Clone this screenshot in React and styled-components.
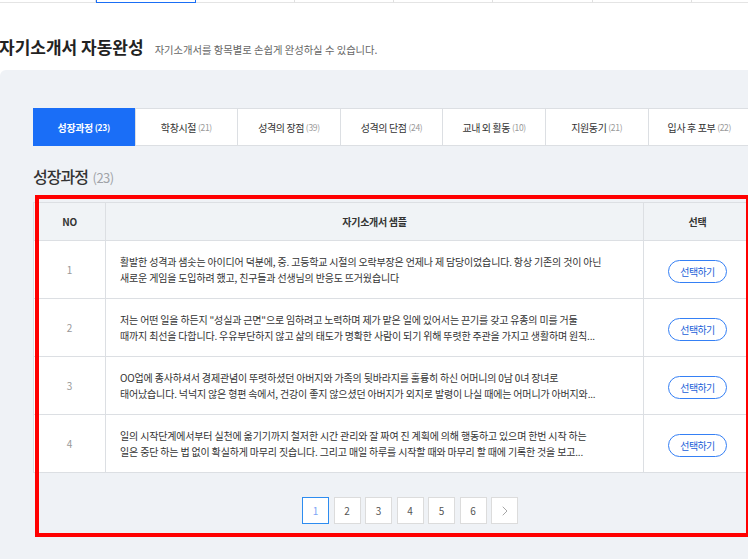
import React from "react";
import styled, { createGlobalStyle } from "styled-components";
import { ChevronRight } from "lucide-react";

const topMenu = ["", "", "", "", "", "", "", ""];

const categories = [
  { name: "성장과정", count: 23 },
  { name: "학창시절", count: 21 },
  { name: "성격의 장점", count: 39 },
  { name: "성격의 단점", count: 24 },
  { name: "교내 외 활동", count: 10 },
  { name: "지원동기", count: 21 },
  { name: "입사 후 포부", count: 22 },
];

// previews come already cut to two lines
const samples = [
  "활발한 성격과 샘솟는 아이디어 덕분에, 중. 고등학교 시절의 오락부장은 언제나 제 담당이었습니다. 항상 기존의 것이 아닌 새로운 게임을 도입하려 했고, 친구들과 선생님의 반응도 뜨거웠습니다",
  "저는 어떤 일을 하든지 \"성실과 근면\"으로 임하려고 노력하며 제가 맡은 일에 있어서는 끈기를 갖고 유종의 미를 거둘 때까지 최선을 다합니다. 우유부단하지 않고 삶의 태도가 명확한 사람이 되기 위해 뚜렷한 주관을 가지고 생활하며 원칙...",
  "OO업에 종사하셔서 경제관념이 뚜렷하셨던 아버지와 가족의 뒷바라지를 훌륭히 하신 어머니의 0남 0녀 장녀로 태어났습니다. 넉넉지 않은 형편 속에서, 건강이 좋지 않으셨던 아버지가 외지로 발령이 나실 때에는 어머니가 아버지와...",
  "일의 시작단계에서부터 실천에 옮기기까지 철저한 시간 관리와 잘 짜여 진 계획에 의해 행동하고 있으며 한번 시작 하는 일은 중단 하는 법 없이 확실하게 마무리 짓습니다. 그리고 매일 하루를 시작할 때와 마무리 할 때에 기록한 것을 보고...",
];

const pages = [1, 2, 3, 4, 5, 6];

const App = () => (
  <Page>
    <GlobalStyle />
    <TopNav>
      {topMenu.map((label, i) => (
        <TopNavItem key={i} active={i === 1}>{label}</TopNavItem>
      ))}
    </TopNav>

    <TitleBar>
      <Title>자기소개서 자동완성</Title>
      <Subtitle>자기소개서를 항목별로 손쉽게 완성하실 수 있습니다.</Subtitle>
    </TitleBar>

    <Section>
      <Tabs>
        {categories.map(({ name, count }, i) => (
          <Tab key={name} active={i === 0}>
            {name} <TabCount active={i === 0}>({count})</TabCount>
          </Tab>
        ))}
      </Tabs>

      <Heading>
        성장과정 <HeadingCount>(23)</HeadingCount>
      </Heading>

      <Highlighted>
        <Table>
          <colgroup>
            <col style={{ width: 72 }} />
            <col style={{ width: 538 }} />
            <col style={{ width: 108 }} />
          </colgroup>
          <thead>
            <tr>
              <HeadCell>NO</HeadCell>
              <HeadCell>자기소개서 샘플</HeadCell>
              <HeadCell>선택</HeadCell>
            </tr>
          </thead>
          <tbody>
            {samples.map((text, i) => (
              <tr key={i}>
                <NumCell>{i + 1}</NumCell>
                <TextCell>{text}</TextCell>
                <SelectCell>
                  <SelectButton>선택하기</SelectButton>
                </SelectCell>
              </tr>
            ))}
          </tbody>
        </Table>

        <Pagination>
          {pages.map((p) => (
            <PageButton key={p} active={p === 1}>{p}</PageButton>
          ))}
          <PageButton>
            <ChevronRight size={16} strokeWidth={1.3} />
          </PageButton>
        </Pagination>
      </Highlighted>
    </Section>
  </Page>
);

const GlobalStyle = createGlobalStyle`
  html, body {
    margin: 0;
    padding: 0;
    overflow: hidden;
    background: #fff;
    font-family: "Noto Sans CJK KR", "Noto Sans", sans-serif;
  }
  * {
    box-sizing: border-box;
  }
`;

const Page = styled.div`
  display: flex;
  flex-direction: column;
  min-height: 100vh;
  width: 760px;
`;

const TopNav = styled.div`
  display: flex;
  height: 3px;
  margin-left: -3px;
  border-bottom: 1px solid #e4e4e4;
`;

const TopNavItem = styled.div`
  width: 99.3px;
  flex: 0 0 99.3px;
  border: 1px solid ${({ active }) => (active ? "#1a6ef5" : "transparent")};
  border-top: none;
  border-right-color: ${({ active }) => (active ? "#1a6ef5" : "#e0e0e0")};
  margin-bottom: -1px;
`;

const TitleBar = styled.div`
  display: flex;
  align-items: baseline;
  height: 67px;
  padding-top: 32px;
`;

const Title = styled.h1`
  margin: 0 0 0 -1px;
  font-size: 17px;
  line-height: 24px;
  font-weight: bold;
  color: #222;
`;

const Subtitle = styled.span`
  margin-left: 11px;
  font-size: 10.3px;
  color: #666;
`;

const Section = styled.div`
  flex: 1;
  background: #eff2f6;
  border-top-left-radius: 6px;
  padding: 38px 0 0 33px;
`;

const Tabs = styled.div`
  display: flex;
  width: 718px;
  height: 38px;
  background: #fff;
  border: 1px solid #dcdfe3;
`;

const Tab = styled.div`
  flex: 0 0 102.6px;
  display: flex;
  align-items: center;
  justify-content: center;
  margin: -1px 0;
  border-right: 1px solid #dcdfe3;
  font-size: 10px;
  letter-spacing: -0.4px;
  white-space: pre;
  color: ${({ active }) => (active ? "#fff" : "#333")};
  font-weight: ${({ active }) => (active ? "bold" : "normal")};
  background: ${({ active }) => (active ? "#1a6ef7" : "transparent")};
  &:first-child {
    margin-left: -1px;
  }
`;

const TabCount = styled.span`
  font-size: 8.5px;
  letter-spacing: -0.3px;
  font-weight: ${({ active }) => (active ? "bold" : "normal")};
  color: ${({ active }) => (active ? "#fff" : "#999")};
`;

const Heading = styled.h2`
  margin: 18px 0 12px;
  font-size: 16px;
  line-height: 24px;
  font-weight: 500;
  letter-spacing: -1px;
  color: #333;
`;

const HeadingCount = styled.span`
  margin-left: 2px;
  font-size: 13px;
  font-weight: normal;
  letter-spacing: -0.5px;
  color: #a0a3a8;
`;

const Highlighted = styled.div`
  position: relative;
  width: 718px;

  &::after {
    content: "";
    position: absolute;
    top: -7px;
    left: 2px;
    right: 1px;
    bottom: -13px;
    border: 4px solid #ff0000;
    pointer-events: none;
  }
`;

const Table = styled.table`
  width: 718px;
  border-collapse: collapse;
  table-layout: fixed;
  background: #fff;
`;

const HeadCell = styled.th`
  height: 38px;
  padding: 0;
  background: #f0f3f6;
  border: 1px solid #dcdfe3;
  font-size: 10px;
  font-weight: bold;
  letter-spacing: -0.3px;
  color: #333;
  text-align: center;
`;

const NumCell = styled.td`
  height: 58px;
  border: 1px solid #dcdfe3;
  text-align: center;
  font-size: 10px;
  color: #999;
`;

const TextCell = styled.td`
  height: 58px;
  padding: 0 38px 0 14px;
  border: 1px solid #dcdfe3;
  font-size: 10px;
  line-height: 16px;
  letter-spacing: -0.17px;
  color: #333;
  word-break: keep-all;
`;

const SelectCell = styled.td`
  height: 58px;
  border: 1px solid #dcdfe3;
  text-align: center;
`;

const SelectButton = styled.button`
  width: 59px;
  height: 23px;
  padding: 0;
  border: 1px solid #3580f5;
  border-radius: 12px;
  background: #fff;
  font-family: inherit;
  font-size: 10px;
  letter-spacing: -0.6px;
  color: #1a5fd8;
  cursor: pointer;
`;

const Pagination = styled.div`
  display: flex;
  justify-content: center;
  gap: 4.5px;
  padding-left: 36px;
  margin-top: 24px;
`;

const PageButton = styled.div`
  display: flex;
  align-items: center;
  justify-content: center;
  width: 27px;
  height: 27px;
  background: #fff;
  border: 1px solid ${({ active }) => (active ? "#2d8cf0" : "#dcdcdc")};
  font-size: 10px;
  color: ${({ active }) => (active ? "#7ea5f5" : "#555")};
  svg {
    color: #999;
  }
`;

export default App;
